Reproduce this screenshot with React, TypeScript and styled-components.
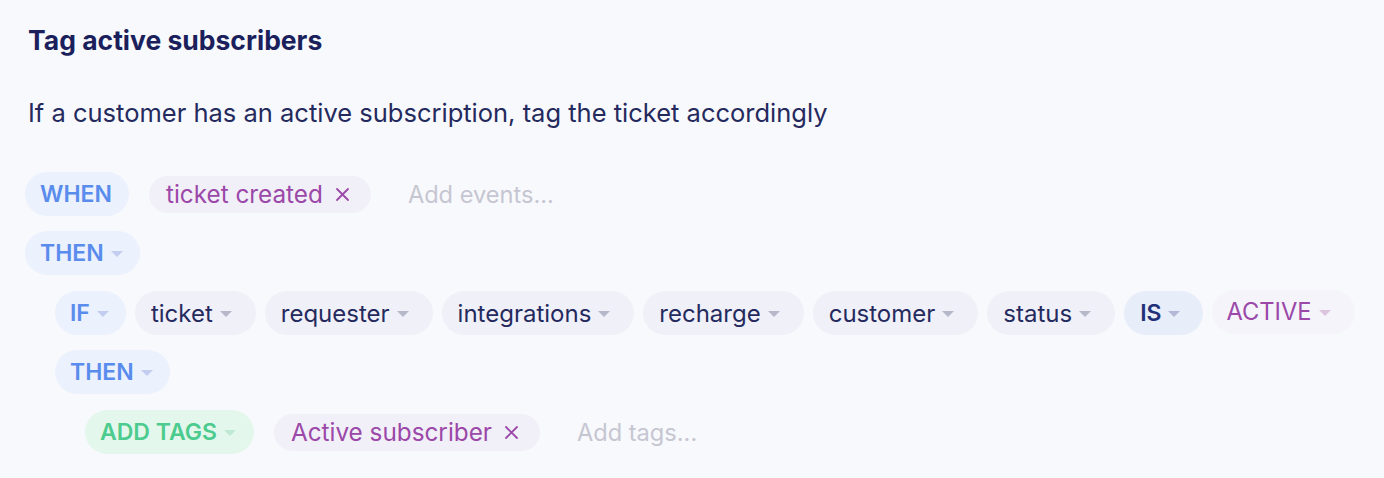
import styled, { createGlobalStyle } from "styled-components";

const GlobalStyle = createGlobalStyle`
    html, body {
        margin: 0;
        padding: 0;
        background-color: #f8f9fc;
    }
    body {
        font-family: Inter, "Noto Sans", sans-serif;
        color: #252a5e;
    }
`;

const Page = styled.div`
    padding: 24px 28px 0 25px;
    width: 1384px;
    height: 478px;
    box-sizing: border-box;
    overflow: hidden;
`;

const Title = styled.h1`
    margin: 0 0 0 3px;
    font-size: 26.5px;
    line-height: 32px;
    font-weight: 700;
    color: #1b1f5c;
`;

const Description = styled.p`
    margin: 41px 0 0 3px;
    font-size: 25.5px;
    line-height: 32px;
    font-weight: 400;
    color: #252a5e;
`;

const Rules = styled.div`
    margin-top: 43px;
    display: flex;
    flex-direction: column;
    gap: 15px;
`;

const Row = styled.div<{ $indent: number; $gap: number; $shift?: number }>`
    display: flex;
    align-items: center;
    gap: ${p => p.$gap}px;
    padding-left: ${p => p.$indent * 30}px;
    margin-top: ${p => p.$shift ?? 0}px;
    height: 44px;
`;

type Tone = "keyword" | "field" | "operator" | "value" | "action" | "tag";

const tones: Record<Tone, { bg: string; fg: string; weight: number; size: number; pad: [number, number] }> = {
    keyword: { bg: "#ebf1fd", fg: "#5a8ced", weight: 600, size: 23, pad: [15, 17] },
    field: { bg: "#f0f0f8", fg: "#252a5e", weight: 400, size: 24, pad: [16, 24] },
    operator: { bg: "#e7edf9", fg: "#223079", weight: 600, size: 23, pad: [16, 23] },
    value: { bg: "#f4f4fa", fg: "#9b48a9", weight: 400, size: 23.7, pad: [14, 24] },
    action: { bg: "#e4f7ec", fg: "#4ccb8e", weight: 600, size: 23, pad: [15, 18] },
    tag: { bg: "#f1eff7", fg: "#9b48a9", weight: 400, size: 24.3, pad: [17, 21] },
};

const Pill = styled.div<{ $tone: Tone; $plain?: boolean }>`
    display: inline-flex;
    align-items: center;
    gap: 7px;
    height: 44px;
    padding: 0 ${p => (p.$plain ? 17 : tones[p.$tone].pad[1])}px 0 ${p => tones[p.$tone].pad[0]}px;
    box-sizing: border-box;
    border-radius: 22px;
    background-color: ${p => tones[p.$tone].bg};
    color: ${p => tones[p.$tone].fg};
    font-size: ${p => tones[p.$tone].size}px;
    font-weight: ${p => tones[p.$tone].weight};
    white-space: nowrap;
`;

const ValuePill = styled(Pill)`
    margin-top: -3px;
`;

const TagPill = styled(Pill)`
    height: 37px;
    gap: 12px;
`;

const Caret = styled.span<{ $color: string }>`
    width: 0;
    height: 0;
    border-left: 6.5px solid transparent;
    border-right: 6.5px solid transparent;
    border-top: 6px solid ${p => p.$color};
    margin-top: 2px;
`;

const RemoveIcon = styled.svg`
    width: 15px;
    height: 15px;
    flex-shrink: 0;
`;

const Placeholder = styled.span`
    font-size: 23.6px;
    color: #c6c6d2;
    margin-left: 17px;
`;

function Remove() {
    return (
        <RemoveIcon viewBox="0 0 15 15" fill="none" stroke="#9b48a9" strokeWidth={1.8} strokeLinecap="round">
            <path d="M2 2L13 13M13 2L2 13" />
        </RemoveIcon>
    );
}

function Select({ tone, label, caret = "#b6b7c9" }: { tone: Tone; label: string; caret?: string }) {
    return (
        <Pill $tone={tone}>
            {label}
            <Caret $color={caret} />
        </Pill>
    );
}

export default function App() {
    const conditions = ["ticket", "requester", "integrations", "recharge", "customer", "status"];

    return (
        <>
            <GlobalStyle />
            <Page>
                <Title>Tag active subscribers</Title>
                <Description>If a customer has an active subscription, tag the ticket accordingly</Description>

                <Rules>
                    <Row $indent={0} $gap={20}>
                        <Pill $tone="keyword" $plain>
                            WHEN
                        </Pill>
                        <TagPill $tone="tag">
                            ticket created
                            <Remove />
                        </TagPill>
                        <Placeholder>Add events...</Placeholder>
                    </Row>

                    <Row $indent={0} $gap={10}>
                        <Select tone="keyword" label="THEN" caret="#c2cdf0" />
                    </Row>

                    <Row $indent={1} $gap={9} $shift={1}>
                        <Select tone="keyword" label="IF" caret="#c2cdf0" />
                        {conditions.map(item => (
                            <Select key={item} tone="field" label={item} />
                        ))}
                        <Select tone="operator" label="IS" caret="#b3b8d6" />
                        <ValuePill $tone="value">
                            ACTIVE
                            <Caret $color="#dcc4df" />
                        </ValuePill>
                    </Row>

                    <Row $indent={1} $gap={10}>
                        <Select tone="keyword" label="THEN" caret="#c2cdf0" />
                    </Row>

                    <Row $indent={2} $gap={20} $shift={1}>
                        <Select tone="action" label="ADD TAGS" caret="#bfe9d2" />
                        <TagPill $tone="tag">
                            Active subscriber
                            <Remove />
                        </TagPill>
                        <Placeholder>Add tags...</Placeholder>
                    </Row>
                </Rules>
            </Page>
        </>
    );
}
